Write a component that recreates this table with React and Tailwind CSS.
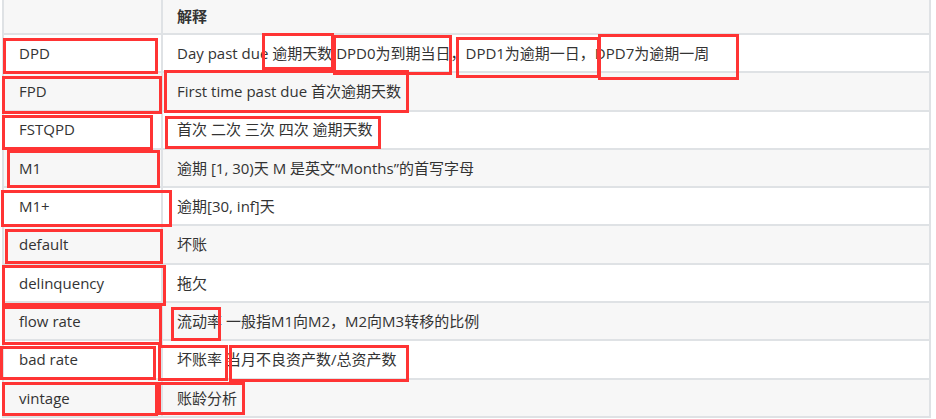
import React from "react";

const rows = [
  ["DPD", "Day past due 逾期天数 DPD0为到期当日，DPD1为逾期一日，DPD7为逾期一周"],
  ["FPD", "First time past due 首次逾期天数"],
  ["FSTQPD", "首次 二次 三次 四次 逾期天数"],
  ["M1", "逾期 [1, 30)天 M 是英文“Months”的首写字母"],
  ["M1+", "逾期[30, inf]天"],
  ["default", "坏账"],
  ["delinquency", "拖欠"],
  ["flow rate", "流动率 一般指M1向M2，M2向M3转移的比例"],
  ["bad rate", "坏账率 当月不良资产数/总资产数"],
  ["vintage", "账龄分析"],
];

// hand-drawn annotation boxes: [left, top, width, height]
const marks = [
  [3, 38, 155, 36],
  [262, 33, 72, 37],
  [333, 35, 119, 40],
  [456, 37, 144, 41],
  [598, 34, 141, 46],
  [2, 76, 160, 38],
  [164, 70, 245, 43],
  [2, 115, 151, 35],
  [165, 116, 216, 33],
  [7, 150, 153, 38],
  [1, 190, 171, 37],
  [5, 229, 158, 35],
  [2, 265, 164, 41],
  [2, 306, 160, 39],
  [171, 307, 50, 34],
  [0, 346, 156, 34],
  [158, 345, 70, 36],
  [229, 345, 180, 37],
  [2, 382, 156, 34],
  [158, 382, 87, 33],
];

export default function App() {
  return (
    <div className="relative w-[936px] h-[419px] overflow-hidden bg-white text-[15px] text-[#333] font-['Open_Sans','Noto_Sans_CJK_SC',sans-serif]">
      <div className="ml-[2px] w-[929px] border-x-2 border-[#dfe2e5]">
        <div className="flex h-[35px] border-b-2 border-[#dfe2e5] bg-[#f7f7f7]">
          <div className="w-[159px] border-r-2 border-[#dfe2e5]"></div>
          <div className="flex-1 flex items-center px-[14px] font-bold">解释</div>
        </div>
        {rows.map(([term, desc], i) => (
          <div
            key={term}
            className={`flex h-[38.3px] border-b-2 border-[#dfe2e5] ${i % 2 ? "bg-[#f7f7f7]" : "bg-white"}`}
          >
            <div className="w-[159px] flex items-center px-[15px] border-r-2 border-[#dfe2e5] whitespace-nowrap">
              {term}
            </div>
            <div className="flex-1 flex items-center px-[14px] whitespace-nowrap">{desc}</div>
          </div>
        ))}
      </div>
      {marks.map(([l, t, w, h], i) => (
        <div
          key={i}
          className="absolute border-[3px] border-[#ff3434] pointer-events-none"
          style={{ left: l, top: t, width: w, height: h }}
        />
      ))}
    </div>
  );
}
